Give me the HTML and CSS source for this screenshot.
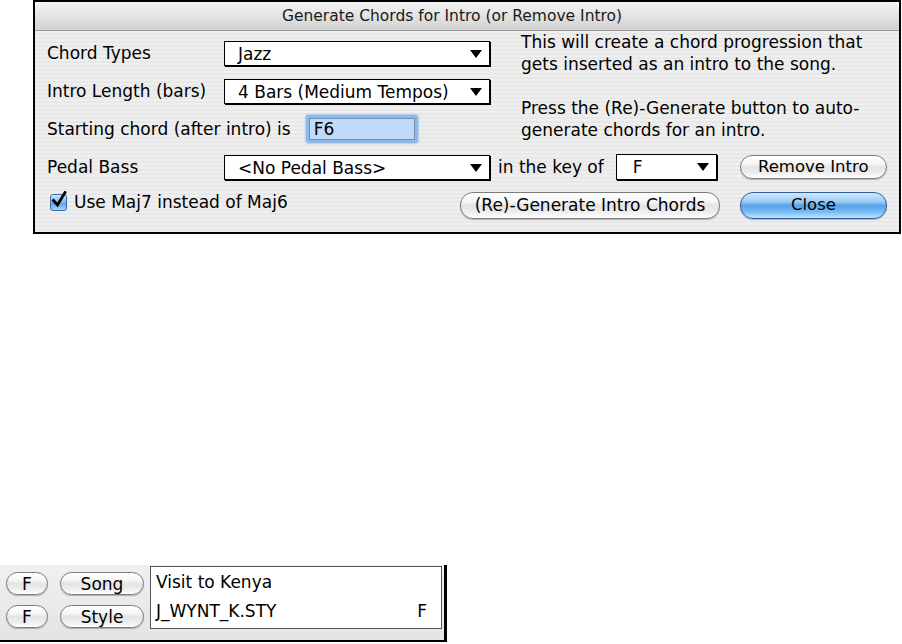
FILE: index.html
```html
<!DOCTYPE html>
<html>
<head>
<meta charset="utf-8">
<link rel="stylesheet" href="styles.css">
</head>
<body>
<div class="page">
  <div class="dialog">
    <div class="titlebar">Generate Chords for Intro (or Remove Intro)</div>
    <div class="content">
      <div class="lbl">Chord Types</div>
      <div class="popup wide"><span>Jazz</span><i class="tri"></i></div>
      <div class="info">This will create a chord progression that<br>gets inserted as an intro to the song.<br><br>Press the (Re)-Generate button to auto-<br>generate chords for an intro.</div>

      <div class="lbl">Intro Length (bars)</div>
      <div class="popup wide"><span>4 Bars (Medium Tempos)</span><i class="tri"></i></div>

      <div class="lbl span2">Starting chord (after intro) is<div class="field"><span>F6</span></div></div>

      <div class="lbl">Pedal Bass</div>
      <div class="popup wide"><span>&lt;No Pedal Bass&gt;</span><i class="tri"></i></div>
      <div class="keyrow">
        <span class="keylbl">in the key of</span>
        <div class="popup key"><span>F</span><i class="tri"></i></div>
        <button class="aqua side">Remove Intro</button>
      </div>

      <div class="lastrow">
        <label class="check"><span class="box"><svg viewBox="0 0 18 18" width="18" height="18"><path d="M3.5 9.5 L7.5 14 L15 1.5" fill="none" stroke="#000" stroke-width="2.8" stroke-linecap="square" stroke-linejoin="miter"/></svg></span>Use Maj7 instead of Maj6</label>
        <button class="aqua regen">(Re)-Generate Intro Chords</button>
        <button class="aqua side primary">Close</button>
      </div>
    </div>
  </div>

  <div class="panel">
    <div class="btngrid">
      <button class="aqua small">F</button>
      <button class="aqua med">Song</button>
      <button class="aqua small">F</button>
      <button class="aqua med">Style</button>
    </div>
    <div class="songbox">
      <div class="line">Visit to Kenya</div>
      <div class="line split"><span>J_WYNT_K.STY</span><span>F</span></div>
    </div>
  </div>
</div>
</body>
</html>
```

FILE: styles.css
```css
* { box-sizing: border-box; }
html, body { margin: 0; padding: 0; background: #fff; }
body {
  width: 902px;
  height: 644px;
  overflow: hidden;
  font-family: "DejaVu Sans", "Liberation Sans", sans-serif;
  font-size: 17px;
  color: #000;
}
.page { display: flex; flex-direction: column; }

.dialog {
  margin-left: 33px;
  width: 868px;
  height: 234px;
  border: 2px solid #000;
  background: #fff;
  display: flex;
  flex-direction: column;
}
.titlebar {
  height: 29px;
  border-radius: 8px 8px 0 0;
  background: linear-gradient(#f3f3f3, #e3e3e3 50%, #d2d2d2);
  border-bottom: 1px solid #9a9a9a;
  text-align: center;
  padding-right: 30px;
  font-size: 15.5px;
  line-height: 29px;
  color: #1a1a1a;
  flex: none;
}
.content {
  flex: 1;
  background: repeating-linear-gradient(#efefef 0px, #efefef 2px, #e8e8e8 2px, #e8e8e8 4px);
  display: grid;
  grid-template-columns: 177px 274px 1fr;
  grid-template-rows: repeat(5, 38px);
  padding: 3px 12px 0 12px;
  align-items: center;
}
.lbl { white-space: nowrap; }
.span2 { grid-column: 1 / 3; display: flex; align-items: center; }
.popup {
  position: relative;
  height: 25px;
  background: #fff;
  border: 1px solid #000;
  box-shadow: 1px 1px 0 #000;
  display: flex;
  align-items: center;
  padding-left: 13px;
  white-space: nowrap;
  flex: none;
}
.popup.wide { width: 266px; margin-top: 1px; }
.popup.key { width: 101px; padding-left: 16px; height: 26px; }
.tri {
  position: absolute;
  right: 7px;
  top: 8px;
  width: 0; height: 0;
  border-left: 6px solid transparent;
  border-right: 6px solid transparent;
  border-top: 8px solid #000;
}
.info {
  grid-column: 3;
  grid-row: 1 / 4;
  align-self: start;
  margin-top: -3px;
  padding-left: 23px;
  line-height: 22px;
  white-space: nowrap;
}
.field {
  margin-left: 15px;
  width: 112px;
  height: 28px;
  border-radius: 3px;
  background: #8eb8e6;
  box-shadow: 0 0 2px 1px #a9cdf2;
  padding: 3px;
  display: flex;
}
.field span {
  flex: 1;
  background: #c0dafa;
  border: 1px solid #6f92bd;
  line-height: 20px;
  padding-left: 4px;
}
.keyrow {
  grid-column: 3;
  display: flex;
  align-items: center;
  white-space: nowrap;
}
.keylbl { margin-right: 12px; flex: none; }
.aqua {
  font-family: inherit;
  font-size: 17px;
  color: #000;
  height: 24px;
  border: 1px solid #7c7c7c;
  border-radius: 13px;
  background: linear-gradient(#ffffff 0%, #f6f6f6 35%, #e4e4e4 50%, #ededed 75%, #ffffff 100%);
  box-shadow: 0 1px 1px rgba(0,0,0,0.25);
  padding: 0;
  line-height: 20px;
  white-space: nowrap;
  flex: none;
}
.side { width: 147px; margin-left: 23px; font-size: 16.5px; }
.lastrow {
  grid-column: 1 / 4;
  display: flex;
  align-items: center;
}
.check { display: flex; align-items: center; margin-left: 3px; margin-top: -6px; }
.box {
  position: relative;
  width: 17px; height: 17px;
  border: 1px solid #3b6ea8;
  border-radius: 3px;
  background: linear-gradient(#cfe6ff, #7fb6ef 50%, #5aa0e8 55%, #a8d6ff);
  margin-right: 7px;
}
.box svg { position: absolute; left: -1px; top: -4px; }
.regen { width: 260px; height: 27px; margin-left: auto; }
.lastrow .side { margin-left: 20px; height: 27px; }
.primary {
  border-color: #2f5f9e;
  background: linear-gradient(#d0e8fe 0%, #9ccaf6 35%, #5aa2ea 50%, #74bbf6 75%, #bfe6ff 100%);
}

.panel {
  margin-top: 331px;
  width: 447px;
  height: 77px;
  background: linear-gradient(#f0f0f0, #e4e4e4);
  border-right: 3px solid #000;
  border-bottom: 2px solid #000;
  display: flex;
  padding: 1px 0 0 6px;
}
.btngrid {
  display: grid;
  grid-template-columns: 42px 84px;
  column-gap: 12px;
  row-gap: 10px;
  padding-top: 6px;
  align-content: start;
}
.aqua.small, .aqua.med { height: 23px; }
.songbox {
  margin-left: 6px;
  width: 292px;
  height: 63px;
  background: #fff;
  border: 1px solid #555;
  padding: 3px 0 0 5px;
}
.line { height: 29px; line-height: 24px; white-space: nowrap; }
.split { display: flex; justify-content: space-between; padding-right: 14px; }
```
